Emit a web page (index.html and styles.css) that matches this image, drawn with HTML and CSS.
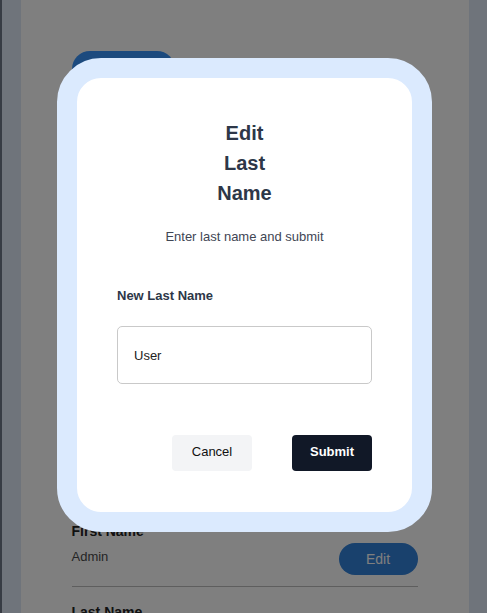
FILE: index.html
```html
<!DOCTYPE html>
<html lang="en">
<head>
<meta charset="utf-8">
<title>Edit Last Name</title>
<link rel="stylesheet" href="styles.css">
</head>
<body>
  <main class="panel">
    <button class="back-btn" type="button">Back</button>
    <h1 class="panel-title">My Profile</h1>
    <ul class="fields">
      <li class="field">
        <div class="field-label">Username</div>
        <div class="field-row"><span class="field-value">admin</span><button class="edit-btn" type="button">Edit</button></div>
      </li>
      <li class="field">
        <div class="field-label">Email</div>
        <div class="field-row"><span class="field-value">admin@example.com</span><button class="edit-btn" type="button">Edit</button></div>
      </li>
      <li class="field">
        <div class="field-label">Phone</div>
        <div class="field-row"><span class="field-value">555-0100</span><button class="edit-btn" type="button">Edit</button></div>
      </li>
      <li class="field">
        <div class="field-label">Role</div>
        <div class="field-row"><span class="field-value">Administrator</span><button class="edit-btn" type="button">Edit</button></div>
      </li>
      <li class="field">
        <div class="field-label">First Name</div>
        <div class="field-row"><span class="field-value">Admin</span><button class="edit-btn" type="button">Edit</button></div>
      </li>
      <li class="field">
        <div class="field-label">Last Name</div>
        <div class="field-row"><span class="field-value">User</span><button class="edit-btn" type="button">Edit</button></div>
      </li>
    </ul>
  </main>

  <div class="overlay">
    <div class="modal">
      <h2 class="modal-title">Edit Last Name</h2>
      <p class="modal-subtitle">Enter last name and submit</p>
      <label class="modal-label" for="lastName">New Last Name</label>
      <input class="modal-input" id="lastName" type="text" value="User">
      <div class="modal-actions">
        <button class="btn btn-cancel" type="button">Cancel</button>
        <button class="btn btn-submit" type="button">Submit</button>
      </div>
    </div>
  </div>
</body>
</html>
```

FILE: styles.css
```css
* {
  box-sizing: border-box;
}

html, body {
  margin: 0;
  padding: 0;
}

body {
  position: relative;
  min-height: 100vh;
  background: #dfe8f7;
  border-left: 2px solid #373c44;
  font-family: "Liberation Sans", Arial, sans-serif;
  overflow: hidden;
}

.panel {
  max-width: 448px;
  min-height: 100vh;
  margin: 0 auto;
  padding: 51px 51px 0;
  background: #ffffff;
}

.back-btn {
  display: block;
  width: 103px;
  height: 36px;
  border: none;
  border-radius: 18px;
  background: #3894fc;
  color: #ffffff;
  font: 14px "Liberation Sans", Arial, sans-serif;
}

.panel-title {
  margin: 24px 0 39px;
  font-size: 22px;
  line-height: 32px;
  color: #1f2937;
}

.fields {
  list-style: none;
  margin: 0;
  padding: 0;
}

.field {
  padding: 15px 0 11px;
  border-bottom: 1px solid #bdbdbd;
}

.field-label {
  font-size: 14px;
  font-weight: bold;
  line-height: 20px;
  color: #222222;
  margin-bottom: 2px;
}

.field-row {
  display: flex;
  align-items: center;
  justify-content: space-between;
  height: 32px;
}

.field-value {
  font-size: 13px;
  line-height: 28px;
  align-self: flex-start;
  color: #4a4a4a;
}

.edit-btn {
  width: 79px;
  height: 32px;
  border: none;
  border-radius: 16px;
  background: #3282da;
  color: #ffffff;
  font: 14px "Liberation Sans", Arial, sans-serif;
}

.overlay {
  position: absolute;
  inset: 0;
  background: rgba(0, 0, 0, 0.5);
  display: flex;
  justify-content: center;
  align-items: flex-start;
  padding-top: 58px;
}

.modal {
  width: 375px;
  border: 20px solid #dbeafe;
  border-radius: 44px;
  background: #ffffff;
  padding: 40px 40px 41px;
  display: flex;
  flex-direction: column;
}

.modal-title {
  width: 70px;
  margin: 0 auto;
  font-size: 20px;
  line-height: 30px;
  font-weight: bold;
  text-align: center;
  color: #2d3748;
}

.modal-subtitle {
  margin: 19px 0 0;
  font-size: 13px;
  line-height: 20px;
  text-align: center;
  color: #3f4654;
}

.modal-label {
  margin-top: 39px;
  font-size: 13px;
  line-height: 20px;
  font-weight: bold;
  color: #2d3748;
}

.modal-input {
  margin-top: 20px;
  height: 58px;
  width: 100%;
  padding: 0 16px;
  border: 1px solid #c9c9c9;
  border-radius: 5px;
  font: 13px "Liberation Sans", Arial, sans-serif;
  color: #222222;
  background: #ffffff;
  outline: none;
}

.modal-actions {
  margin-top: 51px;
  display: flex;
  justify-content: flex-end;
  gap: 40px;
}

.btn {
  width: 80px;
  height: 36px;
  border: none;
  border-radius: 4px;
  padding: 0 0 3px;
  font: 13px "Liberation Sans", Arial, sans-serif;
}

.btn-cancel {
  background: #f3f4f6;
  color: #111111;
}

.btn-submit {
  background: #111827;
  color: #ffffff;
  font-weight: bold;
}
```
